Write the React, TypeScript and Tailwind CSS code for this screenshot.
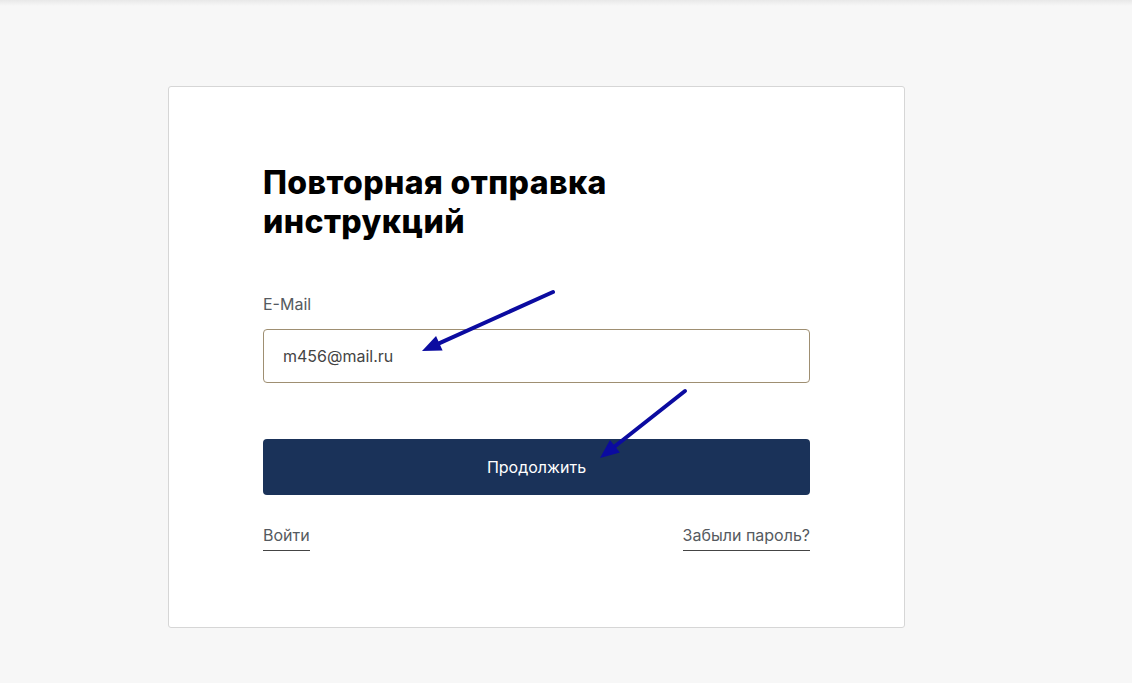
import React from "react";

function Arrow({ x1, y1, x2, y2 }: { x1: number; y1: number; x2: number; y2: number }) {
  const dx = x2 - x1;
  const dy = y2 - y1;
  const len = Math.hypot(dx, dy);
  const ux = dx / len;
  const uy = dy / len;
  const headLen = 19;
  const headW = 8;
  const bx = x2 - ux * headLen;
  const by = y2 - uy * headLen;
  const px = -uy;
  const py = ux;
  const p1 = `${bx + px * headW},${by + py * headW}`;
  const p2 = `${bx - px * headW},${by - py * headW}`;
  return (
    <g>
      <line x1={x1} y1={y1} x2={bx + ux * 4} y2={by + uy * 4} stroke="#0b0ba0" strokeWidth={4} strokeLinecap="round" />
      <polygon points={`${x2},${y2} ${p1} ${p2}`} fill="#0b0ba0" />
    </g>
  );
}

export default function App() {
  return (
    <div
      className="relative w-full min-h-[683px] bg-[#f7f7f7]"
      style={{ fontFamily: "Inter, 'Noto Sans', sans-serif" }}
    >
      <div className="absolute top-0 left-0 right-0 h-[6px] bg-gradient-to-b from-[#e8e8e8] to-[#f7f7f7]" />
      <div className="pt-[86px] pl-[168px]">
        <div className="w-[737px] h-[542px] bg-white border border-[#d6d6d6] rounded-[3px] px-[94px] pt-[76px]">
          <h1 className="max-w-[400px] text-[32px] leading-[39px] font-extrabold text-black tracking-[0.4px]">
            Повторная отправка инструкций
          </h1>
          <div className="mt-[53px] text-[16px] leading-[20px] text-[#555a60]">E-Mail</div>
          <div className="mt-[15px] h-[54px] border border-[#9f8f72] rounded-[4px] flex items-center px-[19px] text-[16px] text-[#444]">
            m456@mail.ru
          </div>
          <button className="mt-[56px] w-full h-[56px] bg-[#1a3259] rounded-[4px] text-white text-[16px] font-normal flex items-center justify-center">
            Продолжить
          </button>
          <div className="mt-[30px] flex justify-between text-[16px] leading-[20px] text-[#555a60]">
            <span className="border-b border-[#444] pb-[5px]">Войти</span>
            <span className="border-b border-[#444] pb-[5px]">Забыли пароль?</span>
          </div>
        </div>
      </div>
      <svg className="absolute inset-0 pointer-events-none" width="1132" height="683">
        <Arrow x1={553} y1={292} x2={422} y2={351} />
        <Arrow x1={685} y1={391} x2={600} y2={458} />
      </svg>
    </div>
  );
}
